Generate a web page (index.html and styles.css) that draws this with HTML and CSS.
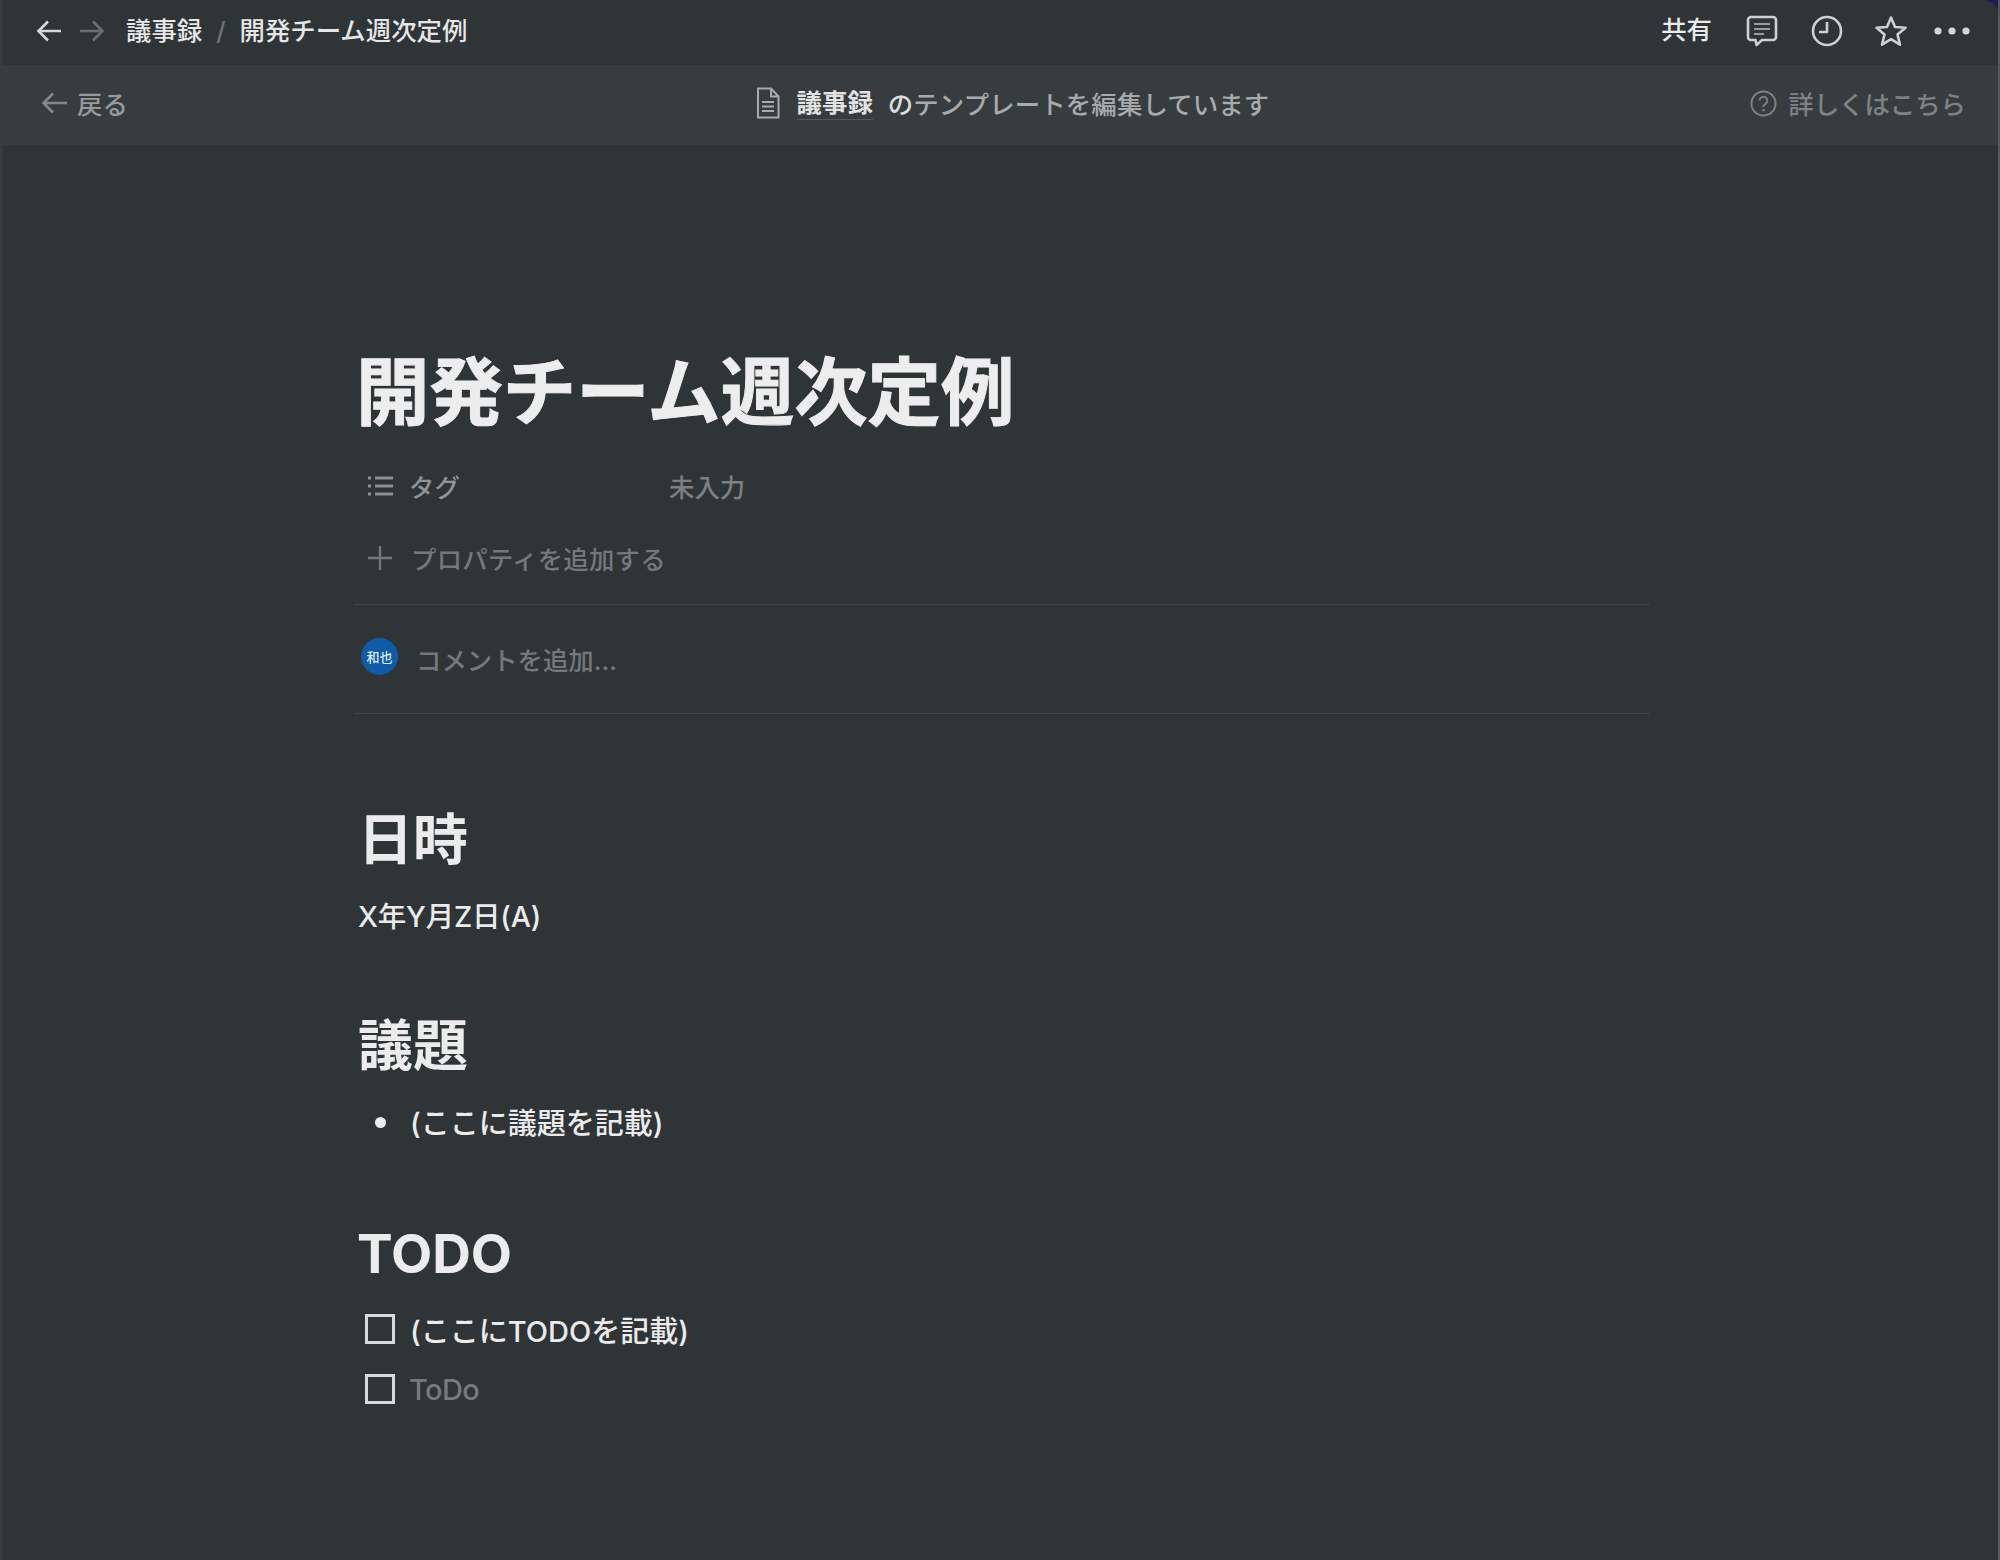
FILE: index.html
```html
<!DOCTYPE html>
<html lang="ja">
<head>
<meta charset="utf-8">
<title>開発チーム週次定例</title>
<link rel="stylesheet" href="styles.css">
</head>
<body>
<div class="app">
  <header class="topbar">
    <div class="crumbs">
      <svg class="nav-icon" viewBox="0 0 30 30"><path d="M27 15H5M14 5.500 4.500 15l9.500 9.500"/></svg>
      <svg class="nav-icon dim" viewBox="0 0 30 30"><path d="M3 15h22M16 5.500l9.500 9.500-9.500 9.500"/></svg>
      <span class="crumb first">議事録</span>
      <span class="slash">/</span>
      <span class="crumb">開発チーム週次定例</span>
    </div>
    <div class="actions">
      <span class="share">共有</span>
      <svg class="act-icon" viewBox="0 0 32 32"><path d="M5 2h22a3 3 0 0 1 3 3v17a3 3 0 0 1-3 3H16l-5.500 5-1-5H5a3 3 0 0 1-3-3V5a3 3 0 0 1 3-3z"/><path class="thin" d="M8 9h16M8 14h16M8 19h10"/></svg>
      <svg class="act-icon" viewBox="0 0 32 32"><circle cx="16" cy="16" r="14"/><path d="M16 7v10H8"/></svg>
      <svg class="act-icon last" viewBox="0 0 32 32"><path d="M16 2.500l4 9.500 10.500.800-8 6.700 2.500 10.200-9-5.500-9 5.500 2.500-10.200-8-6.700 10.500-.800z"/></svg>
      <svg class="dots" viewBox="0 0 36 8"><circle cx="4" cy="4" r="3.600"/><circle cx="18" cy="4" r="3.600"/><circle cx="32" cy="4" r="3.600"/></svg>
    </div>
  </header>

  <div class="banner">
    <div class="back">
      <svg class="back-icon" viewBox="0 0 30 30"><path d="M28 15H5M14 5.500 4.500 15l9.500 9.500"/></svg>
      <span>戻る</span>
    </div>
    <div class="editing">
      <svg class="doc-icon" viewBox="0 0 24 32"><path d="M2 1.500h13l7.500 8v21H2zM15 1.500v8h7.500"/><path d="M6 15h12M6 19.500h12M6 24h12"/></svg>
      <span class="tpl">議事録</span>
      <span class="of"><span class="no">の</span>テンプレートを編集しています</span>
    </div>
    <div class="help">
      <svg class="help-icon" viewBox="0 0 28 28"><circle cx="14" cy="14" r="12.500"/><path d="M10 11a4 4 0 1 1 6.200 3.300c-1.400 1-2.200 1.700-2.200 3.200"/><circle class="dot" cx="14" cy="21" r="1.300"/></svg>
      <span>詳しくはこちら</span>
    </div>
  </div>

  <main class="page">
    <h1 class="title">開発チーム週次定例</h1>

    <div class="prop">
      <svg class="prop-icon" viewBox="0 0 26 22"><path d="M8 3h18M8 11h18M8 19h18"/><path d="M1 3h3M1 11h3M1 19h3"/></svg>
      <span class="prop-name">タグ</span>
      <span class="prop-value">未入力</span>
    </div>
    <div class="prop add">
      <svg class="prop-icon plus" viewBox="0 0 26 26"><path d="M13 1v24M1 13h24"/></svg>
      <span class="add-label">プロパティを追加する</span>
    </div>

    <div class="comment">
      <span class="avatar">和也</span>
      <span class="comment-text">コメントを追加...</span>
    </div>

    <h2 class="h first-h">日時</h2>
    <p class="text">X年Y月Z日(A)</p>

    <h2 class="h">議題</h2>
    <div class="item">
      <span class="marker bulleted"><span class="bullet"></span></span>
      <span>(ここに議題を記載)</span>
    </div>

    <h2 class="h todo-h">TODO</h2>
    <div class="item todo">
      <span class="marker"><span class="check"></span></span>
      <span>(ここにTODOを記載)</span>
    </div>
    <div class="item todo">
      <span class="marker"><span class="check"></span></span>
      <span class="placeholder">ToDo</span>
    </div>
  </main>
</div>
</body>
</html>
```
FILE: styles.css
```css
* { box-sizing: border-box; }
html, body { margin: 0; padding: 0; background: #2f3437; }
body {
  font-family: Inter, "Noto Sans CJK JP", "Liberation Sans", sans-serif;
  color: #ebebeb;
}
.app {
  position: relative;
  width: 2000px;
  height: 1560px;
  overflow: hidden;
  background: #2f3437;
  border-left: 3px solid #373c3f;
  border-right: 2px solid #55585b;
  display: flex;
  flex-direction: column;
  font-size: 25.400px;
  font-weight: 500;
}
.app::after {
  content: "";
  position: absolute;
  top: 0;
  right: -2px;
  width: 14px;
  height: 14px;
  background: radial-gradient(circle at 0 100%, transparent 12px, #1d1d4f 13.500px);
}
svg { display: block; fill: none; flex: none; }

.topbar {
  height: 65px;
  flex: none;
  display: flex;
  align-items: center;
  justify-content: space-between;
  padding: 0 28px 4px 31px;
}
.crumbs { display: flex; align-items: center; }
.nav-icon { width: 30px; height: 30px; stroke: #d6d7d8; stroke-width: 2.600; margin-right: 13px; }
.nav-icon.dim { stroke: #6d7073; margin-right: 0; }
.crumb { font-weight: 500; color: #e6e6e6; line-height: 34px; }
.crumb.first { margin-left: 19px; }
.slash { color: #6f7275; margin: 0 14px 0 14px; }
.actions { display: flex; align-items: center; }
.share { font-weight: 500; color: #e9e9e9; margin-right: 34px; padding-bottom: 5px; margin-top: -1px; }
.act-icon { width: 32px; height: 32px; stroke: #cfd0d1; stroke-width: 2.600; margin-right: 32.500px; stroke-linejoin: round; }
.act-icon.last { margin-right: 27px; }
.act-icon .thin { stroke: #9a9c9e; stroke-width: 1.800; }
.dots { width: 36px; height: 8px; fill: #d4d5d6; }

.banner {
  height: 80px;
  flex: none;
  background: #373c3f;
  display: grid;
  grid-template-columns: 1fr auto 1fr;
  align-items: center;
  padding: 0 32px 4px 36px;
  color: #8f9193;
}
.back { display: flex; align-items: center; gap: 8px; color: #97999b; }
.back-icon { width: 30px; height: 30px; stroke: #85888a; stroke-width: 2.600; }
.editing { display: flex; align-items: center; color: #a8aaab; margin-left: 20px; }
.doc-icon { width: 24px; height: 32px; stroke: #a8aaab; stroke-width: 2; margin-right: 17px; }
.tpl { font-weight: 700; color: #e2e2e2; border-bottom: 1px solid #54585a; line-height: 32px; margin-right: 15px; }
.of { letter-spacing: 0.150px; }
.no { color: #dcdcdc; }
.help { display: flex; align-items: center; justify-content: flex-end; gap: 11px; color: #7f8284; letter-spacing: 0; }
.help-icon { width: 27px; height: 27px; stroke: #7f8284; stroke-width: 2; }
.help-icon .dot { fill: #7f8284; stroke: none; }

.page {
  margin-left: 351px;
  width: 1296px;
  padding-top: 204px;
}
.title {
  margin: 0 0 0 2px;
  font-size: 73.400px;
  line-height: 88px;
  font-weight: 700;
  color: #ededed;
  -webkit-text-stroke: 1px #ededed;
}
.prop {
  height: 72px;
  display: flex;
  align-items: center;
  padding: 0 0 2px 13px;
  color: #919394;
}
.prop:first-of-type { margin-top: 14px; }
.prop-icon { width: 26px; height: 22px; stroke: #8c8e90; stroke-width: 3; margin-right: 16px; }
.prop-icon.plus { height: 26px; stroke: #73767a; stroke-width: 2.400; margin-right: 18px; }
.prop-name { width: 260px; }
.prop-value { color: #7d8082; }
.add-label { color: #75787a; letter-spacing: 0.250px; }
.comment {
  margin-top: 9px;
  height: 110px;
  border-top: 1px solid #3e4346;
  border-bottom: 1px solid #3e4346;
  display: flex;
  align-items: center;
  padding-left: 7px;
}
.avatar {
  width: 37px;
  height: 37px;
  border-radius: 50%;
  background: #0f5ba6;
  color: #dfe9f5;
  font-size: 13px;
  font-weight: 500;
  display: flex;
  align-items: center;
  justify-content: center;
  margin: -6px 18px 0 0;
}
.comment-text { color: #75787a; }

.h {
  margin: 75px 0 0 4px;
  font-size: 55px;
  line-height: 64px;
  font-weight: 700;
  color: #ececec;
}
.first-h { margin-top: 93px; }
.todo-h { margin: 72px 0 0 3px; font-size: 53.500px; }
.text {
  margin: 25px 0 0 4px;
  font-size: 28.500px;
  letter-spacing: -0.200px;
  line-height: 42px;
  color: #ebebeb;
}
.item {
  display: flex;
  align-items: center;
  height: 59px;
  margin-top: 14px;
  padding-left: 11px;
  font-size: 29px;
  color: #ebebeb;
}
.item.todo { height: 60px; margin-top: 13px; }
.item.todo + .item.todo { margin-top: 0; }
.marker { width: 30px; height: 30px; display: flex; align-items: center; justify-content: center; margin-right: 15px; flex: none; }
.marker.bulleted { margin-top: 3px; }
.bullet { width: 11px; height: 11px; border-radius: 50%; background: #ededed; }
.check { width: 30px; height: 30px; border: 3px solid #d8d9da; }
.placeholder { color: #77797c; letter-spacing: -0.600px; margin-left: -1px; }
```
